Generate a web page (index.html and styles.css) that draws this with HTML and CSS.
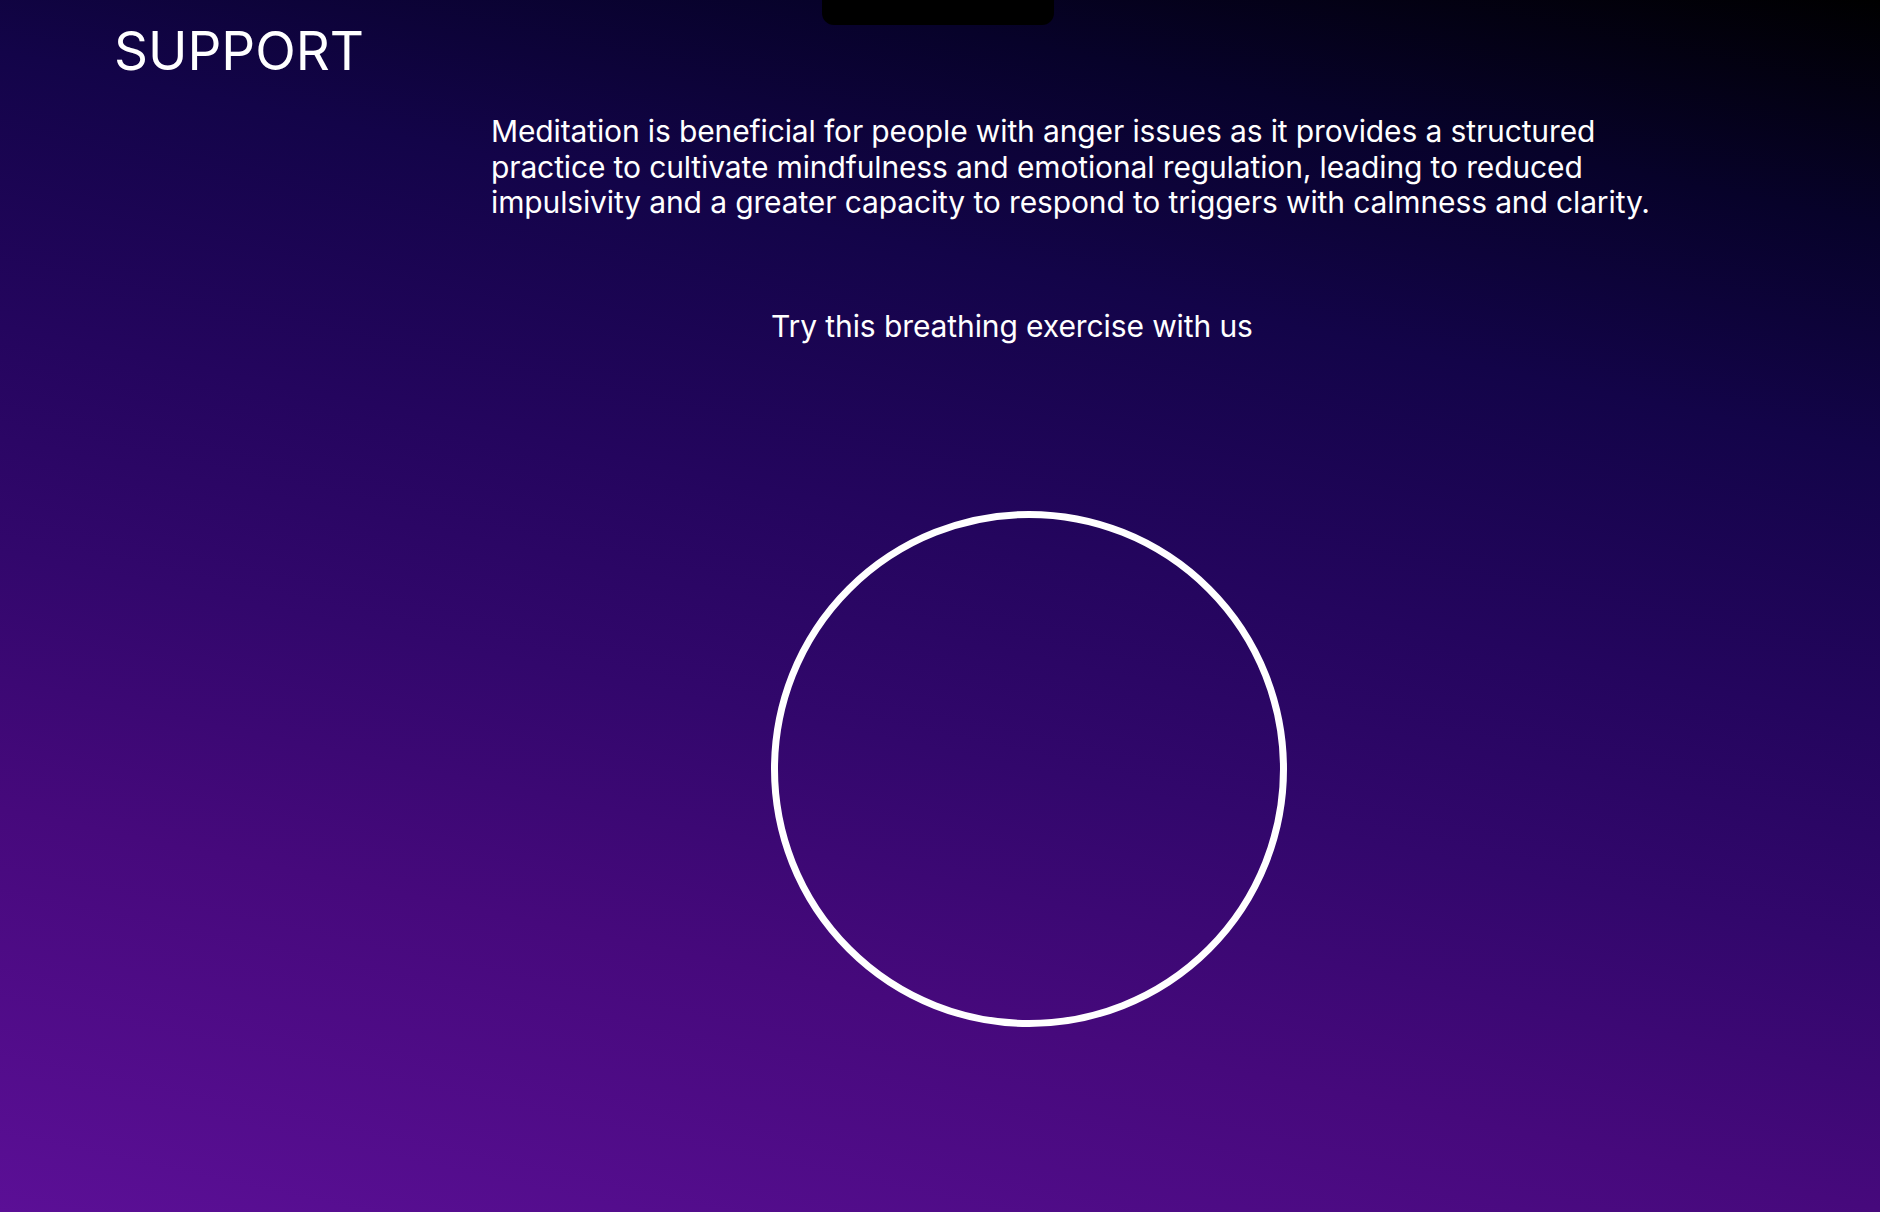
FILE: index.html
```html
<!DOCTYPE html>
<html lang="en">
<head>
<meta charset="utf-8">
<title>Support</title>
<link rel="stylesheet" href="styles.css">
</head>
<body>
<div class="notch"></div>
<main class="page">
  <h1 class="title">SUPPORT</h1>
  <p class="intro">Meditation is beneficial for people with anger issues as it provides a structured practice to cultivate mindfulness and emotional regulation, leading to reduced impulsivity and a greater capacity to respond to triggers with calmness and clarity.</p>
  <section class="exercise">
    <p class="exercise-label">Try this breathing exercise with us</p>
    <div class="breath-circle"></div>
  </section>
</main>
</body>
</html>
```

FILE: styles.css
```css
html, body {
  margin: 0;
  padding: 0;
}

body {
  width: 1880px;
  height: 1212px;
  overflow: hidden;
  position: relative;
  font-family: Inter, "Noto Sans", sans-serif;
  color: #ffffff;
  background: linear-gradient(12deg,
    #5b0f96 0%,
    #46097c 25%,
    #32076c 41%,
    #24055e 55%,
    #130449 72%,
    #07022a 86%,
    #000000 100%);
}

.notch {
  position: absolute;
  top: 0;
  left: 822px;
  width: 232px;
  height: 25px;
  background: #000;
  border-radius: 0 0 12px 12px;
}

.page {
  display: flex;
  flex-direction: column;
  padding-top: 18px;
}

.title {
  margin: 0 0 0 114px;
  font-size: 53px;
  font-weight: 400;
  line-height: 66px;
  letter-spacing: 0;
}

.intro {
  margin: 30px 0 0 491px;
  width: 1180px;
  font-size: 30px;
  line-height: 35.5px;
  letter-spacing: -0.13px;
}

.exercise {
  display: flex;
  flex-direction: column;
  align-items: flex-start;
  margin: 87px 0 0 771px;
}

.exercise-label {
  margin: 0;
  font-size: 30px;
  line-height: 36px;
  letter-spacing: -0.1px;
}

.breath-circle {
  margin-top: 167px;
  width: 516px;
  height: 516px;
  box-sizing: border-box;
  border: 7px solid #ffffff;
  border-radius: 50%;
}
```
